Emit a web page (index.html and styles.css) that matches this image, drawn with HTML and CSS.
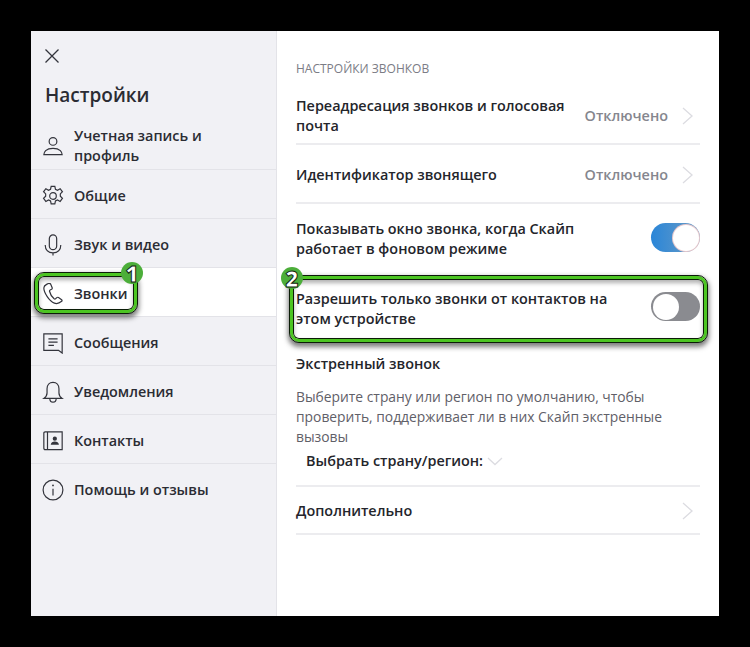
FILE: index.html
```html
<!DOCTYPE html>
<html lang="ru">
<head>
<meta charset="utf-8">
<title>Настройки</title>
<link rel="stylesheet" href="styles.css">
</head>
<body>
<div class="window">
  <aside class="sidebar">
    <button class="close" aria-label="Закрыть">
      <svg width="16" height="16" viewBox="0 0 16 16"><path d="M1.5 1.5l13 13M14.5 1.5l-13 13" class="ln"/></svg>
    </button>
    <h1 class="title">Настройки</h1>
    <nav class="nav">
      <div class="nav-item first">
        <svg class="ico" width="24" height="24" viewBox="0 0 24 24"><circle cx="12" cy="7" r="4.2" class="ln"/><path d="M2 21.500c0-1.200 .5-3 2-4.500 1.500-1.400 4-2.500 8-2.500s6.500 1.100 8 2.500c1.500 1.500 2 3.300 2 4.500z" class="ln"/></svg>
        <span>Учетная запись и профиль</span>
      </div>
      <div class="nav-item">
        <svg class="ico" width="24" height="24" viewBox="0 0 24 24"><path d="M10 1.500h4l.7 3.200 2.200 1 2.900-1.600 2.500 3.300-2.300 2.300v2.600l2.300 2.300-2.500 3.300-2.900-1.600-2.200 1-.7 3.200h-4l-.7-3.200-2.200-1-2.900 1.600-2.500-3.300 2.300-2.300v-2.600l-2.300-2.300 2.500-3.300 2.900 1.600 2.200-1z" class="ln"/><circle cx="12" cy="12" r="3.600" class="ln"/></svg>
        <span>Общие</span>
      </div>
      <div class="nav-item">
        <svg class="ico" width="24" height="24" viewBox="0 0 24 24"><rect x="8" y="1" width="8" height="16" rx="4" class="ln"/><path d="M3.500 12c0 5.500 3.500 8.500 8.500 8.500s8.500-3 8.500-8.500M12 20.500v3" class="ln"/></svg>
        <span>Звук и видео</span>
      </div>
      <div class="nav-item active">
        <svg class="ico" width="24" height="24" viewBox="0 0 24 24"><path d="M5 1.500c-1.500.8-3 2.200-3 4 0 5 6 14.500 11.500 16.500 2.500.9 5.500 0 8-2 .6-.6.500-1.300-.1-1.800l-3.400-2.400c-.7-.4-1.300-.3-1.900.2l-1.300 1.200c-.5.4-1 .4-1.600 0-2.400-2-4.300-5.200-5-8.200-.1-.7.100-1.100.7-1.400l1.500-.7c.7-.4.900-1 .7-1.700l-1.700-4c-.5-.8-1.400-1-2.400-.7z" class="ln"/></svg>
        <span>Звонки</span>
      </div>
      <div class="nav-item">
        <svg class="ico" width="24" height="24" viewBox="0 0 24 24"><path d="M22 23V2H2v18h16z M22 19v4" class="ln"/><path d="M7 7.500h10M7 11h10M7 14.500h6" class="ln"/></svg>
        <span>Сообщения</span>
      </div>
      <div class="nav-item">
        <svg class="ico" width="24" height="24" viewBox="0 0 24 24"><path d="M12 1.500c-4 0-6.500 3-6.500 7v4.500c0 2.500-1.500 4.500-3.500 6h20c-2-1.500-3.500-3.500-3.500-6V8.500c0-4-2.500-7-6.500-7zM8.500 19c0 2.500 1.500 4 3.500 4s3.500-1.500 3.500-4" class="ln"/></svg>
        <span>Уведомления</span>
      </div>
      <div class="nav-item">
        <svg class="ico" width="24" height="24" viewBox="0 0 24 24"><path d="M2 3.500C2 2.500 2.500 2 3.500 2H22v19.500H3.500c-1 0-1.500-.5-1.500-1.500zM6 2v19.500" class="ln"/><circle cx="14" cy="9.500" r="2.300" class="fill"/><path d="M9.500 16c.3-2.500 2.200-3.500 4.500-3.500s4.200 1 4.500 3.500z" class="fill"/></svg>
        <span>Контакты</span>
      </div>
      <div class="nav-item">
        <svg class="ico" width="24" height="24" viewBox="0 0 24 24"><circle cx="12" cy="12" r="10.800" class="ln"/><path d="M12 10.500v7.500" class="ln"/><circle cx="12" cy="7" r="1" class="fill"/></svg>
        <span>Помощь и отзывы</span>
      </div>
    </nav>
  </aside>

  <main class="content">
    <h2 class="section-label">НАСТРОЙКИ ЗВОНКОВ</h2>

    <div class="row r-forward">
      <div class="row-text">Переадресация звонков и голосовая почта</div>
      <span class="state">Отключено</span>
      <svg class="chev" width="12" height="18" viewBox="0 0 12 18"><path d="M1 1l9 8-9 8" class="chev-ln"/></svg>
    </div>

    <div class="row r-caller">
      <div class="row-text">Идентификатор звонящего</div>
      <span class="state">Отключено</span>
      <svg class="chev" width="12" height="18" viewBox="0 0 12 18"><path d="M1 1l9 8-9 8" class="chev-ln"/></svg>
    </div>

    <div class="row plain r-window">
      <div class="row-text">Показывать окно звонка, когда Скайп работает в фоновом режиме</div>
      <div class="toggle on"><i class="knob"></i></div>
    </div>

    <div class="row plain r-contacts">
      <div class="row-text">Разрешить только звонки от контактов на этом устройстве</div>
      <div class="toggle off"><i class="knob"></i></div>
    </div>

    <section class="emergency">
      <h3 class="em-title">Экстренный звонок</h3>
      <p class="em-desc">Выберите страну или регион по умолчанию, чтобы проверить, поддерживает ли в них Скайп экстренные вызовы</p>
      <div class="em-select">
        <span>Выбрать страну/регион:</span>
        <svg width="16" height="9" viewBox="0 0 16 9"><path d="M1 1l7 6.500L15 1" class="chev-ln"/></svg>
      </div>
    </section>

    <div class="row r-more">
      <div class="row-text">Дополнительно</div>
      <svg class="chev" width="12" height="18" viewBox="0 0 12 18"><path d="M1 1l9 8-9 8" class="chev-ln"/></svg>
    </div>
  </main>
</div>

<div class="mark mark-1"></div>
<div class="badge badge-1">1</div>
<div class="mark mark-2"></div>
<div class="badge badge-2">2</div>
</body>
</html>
```

FILE: styles.css
```css
* { box-sizing: border-box; }
html, body { margin: 0; height: 100%; }
body {
  position: relative;
  width: 750px;
  height: 647px;
  overflow: hidden;
  background: #000;
  padding: 31px;
  font-family: "Open Sans", "Noto Sans", sans-serif;
  color: #24252b;
}
.window {
  display: flex;
  width: 688px;
  height: 585px;
  background: #fff;
}
.ln { fill: none; stroke: #33343c; stroke-width: 1.3; }
.fill { fill: #33343c; }
.sidebar {
  width: 246px;
  flex: none;
  background: #f1f1f5;
  border-right: 1px solid #e3e3e8;
  padding-top: 17px;
}
.close {
  display: block;
  margin-left: 13px;
  width: 16px;
  height: 16px;
  padding: 0;
  border: 0;
  background: none;
}
.close svg { display: block; }
.title {
  margin: 17px 0 0 14px;
  font-size: 19px;
  line-height: 28px;
  font-weight: 600;
  color: #2b2c33;
}
.nav { margin-top: 11px; }
.nav-item {
  display: flex;
  align-items: center;
  height: 49px;
  border-bottom: 1px solid #e3e3e8;
  padding: 3px 0 0 11px;
  font-size: 14.400px;
  font-weight: 600;
  line-height: 20px;
  color: #2b2c33;
}
.nav-item.first { height: 50px; padding-top: 2px; }
.nav-item:last-child { border-bottom: 0; }
.nav-item.active { background: #fff; }
.ico { flex: none; width: 22px; height: 22px; margin-right: 10px; }
.nav-item span { width: 150px; }
.content { flex: 1; padding: 31px 19px 0 19px; }
.section-label {
  margin: 0;
  font-size: 12px;
  line-height: 14px;
  font-weight: 400;
  color: #7b7c85;
}
.row {
  display: flex;
  align-items: center;
  border-bottom: 2px solid #ececef;
  font-size: 14.400px;
  font-weight: 600;
  line-height: 20px;
}
.row-text { flex: 1; }
.r-forward { height: 69px; padding-top: 13px; }
.r-forward .row-text { flex: none; width: 280px; }
.r-forward .state { margin-left: auto; }
.r-caller { height: 59px; padding-top: 3px; }
.r-window { height: 66px; padding-top: 4px; }
.r-contacts { height: 69px; padding-top: 9px; }
.plain { border-bottom: 0; }
.plain .row-text { flex: none; width: 325px; }
.plain .toggle { margin-left: auto; }
.r-window .toggle { margin-bottom: 3px; }
.r-contacts .toggle { margin-bottom: 5px; }
.state { color: #85868e; }
.chev { flex: none; margin: 0 6px 0 14px; }
.chev-ln { fill: none; stroke: #dcdce1; stroke-width: 1.300; }
.toggle {
  position: relative;
  width: 49px;
  height: 29px;
  flex: none;
  border-radius: 15px;
}
.toggle.on { background: linear-gradient(90deg, #2a86d8, #6d9cc4); }
.toggle.off { background: #8a8b90; }
.knob {
  position: absolute;
  top: 1.500px;
  width: 26px;
  height: 26px;
  border-radius: 50%;
  background: #fff;
}
.on .knob { right: 1.500px; box-shadow: 0 0 0 1px #e6c8cc; }
.off .knob { left: 1.500px; }
.emergency { padding-top: 15px; }
.em-title {
  margin: 0;
  font-size: 14.400px;
  line-height: 20px;
  font-weight: 600;
}
.em-desc {
  margin: 13px 0 0;
  font-size: 13.850px;
  line-height: 20px;
  font-weight: 400;
  color: #5f6068;
}
.em-select {
  display: flex;
  align-items: center;
  gap: 4px;
  margin-top: 4px;
  padding: 0 0 14px 10px;
  border-bottom: 2px solid #ececef;
  font-size: 14.400px;
  line-height: 20px;
  font-weight: 600;
}
.r-more { height: 48px; padding-top: 1px; }

.mark {
  position: absolute;
  border: 3px solid #4cc522;
  border-radius: 9px;
  outline: 1px solid #0b1c07;
  box-shadow: inset 0 0 0 1px #0b1c07, 0 3px 5px 2px rgba(40,40,40,.6), inset 0 3px 4px 1px rgba(60,60,60,.4);
}
.mark-1 { left: 35px; top: 273px; width: 102px; height: 40px; }
.mark-2 { left: 290px; top: 276px; width: 417px; height: 66px; }
.badge {
  position: absolute;
  width: 22px;
  height: 22px;
  border-radius: 50%;
  background: #4cae3a;
  color: #fff;
  font-size: 22px;
  line-height: 22px;
  font-weight: 800;
  text-align: center;
  -webkit-text-stroke: 1px #10240c;
}
.badge-1 { left: 121px; top: 262px; }
.badge-2 { left: 281px; top: 267px; }
```
